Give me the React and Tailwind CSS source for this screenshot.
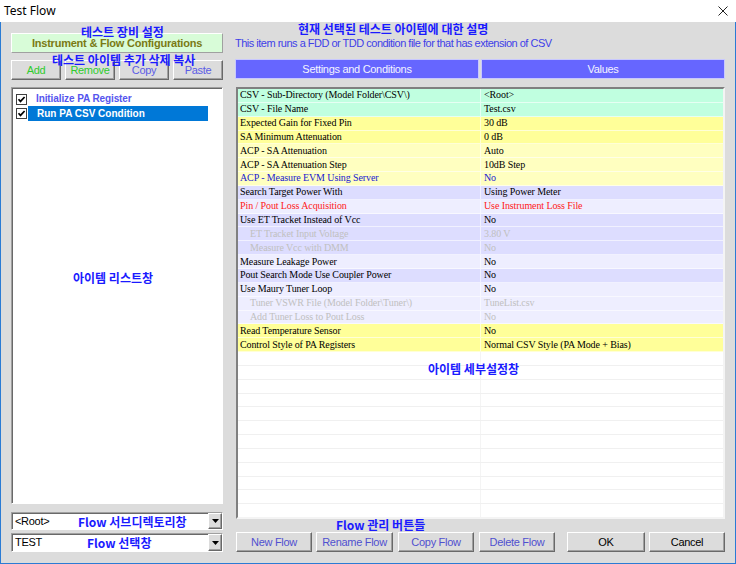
const raised =
  'border border-t-white border-l-white border-r-[#696969] border-b-[#696969] shadow-[inset_-1px_-1px_0_#a0a0a0]';
const sunken =
  'border border-t-[#a0a0a0] border-l-[#a0a0a0] border-r-white border-b-white shadow-[inset_1px_1px_0_#696969]';

const rows = [
  { l: 'CSV - Sub-Directory (Model Folder\\CSV\\)', v: '<Root>', bg: 'bg-[#c0ffe0]' },
  { l: 'CSV - File Name', v: 'Test.csv', bg: 'bg-[#c0ffe0]' },
  { l: 'Expected Gain for Fixed Pin', v: '30 dB', bg: 'bg-[#ffff99]' },
  { l: 'SA Minimum Attenuation', v: '0 dB', bg: 'bg-[#ffff99]' },
  { l: 'ACP - SA Attenuation', v: 'Auto', bg: 'bg-[#ffffc0]' },
  { l: 'ACP - SA Attenuation Step', v: '10dB Step', bg: 'bg-[#ffffc0]' },
  { l: 'ACP - Measure EVM Using Server', v: 'No', bg: 'bg-[#ffffc0]', c: 'text-[#2020d0]' },
  { l: 'Search Target Power With', v: 'Using Power Meter', bg: 'bg-[#ddddff]' },
  { l: 'Pin / Pout Loss Acquisition', v: 'Use Instrument Loss File', bg: 'bg-[#eeeeff]', c: 'text-[#ff2020]' },
  { l: 'Use ET Tracket Instead of Vcc', v: 'No', bg: 'bg-[#ddddff]' },
  { l: 'ET Tracket Input Voltage', v: '3.80 V', bg: 'bg-[#ddddff]', dis: true },
  { l: 'Measure Vcc with DMM', v: 'No', bg: 'bg-[#ddddff]', dis: true },
  { l: 'Measure Leakage Power', v: 'No', bg: 'bg-[#eeeeff]' },
  { l: 'Pout Search Mode Use Coupler Power', v: 'No', bg: 'bg-[#ddddff]' },
  { l: 'Use Maury Tuner Loop', v: 'No', bg: 'bg-[#eeeeff]' },
  { l: 'Tuner VSWR File (Model Folder\\Tuner\\)', v: 'TuneList.csv', bg: 'bg-[#eeeeff]', dis: true },
  { l: 'Add Tuner Loss to Pout Loss', v: 'No', bg: 'bg-[#eeeeff]', dis: true },
  { l: 'Read Temperature Sensor', v: 'No', bg: 'bg-[#ffff99]' },
  { l: 'Control Style of PA Registers', v: 'Normal CSV Style (PA Mode + Bias)', bg: 'bg-[#ffff99]' },
];

function Btn({ children, className = '' }) {
  return (
    <div
      className={`flex items-center justify-center bg-[#dcdcdc] text-[11px] tracking-[-0.3px] leading-none ${raised} ${className}`}
    >
      {children}
    </div>
  );
}

function Check() {
  return (
    <svg width="11" height="11" viewBox="0 0 11 11" className="shrink-0">
      <rect x="0.5" y="0.5" width="10" height="10" fill="#fff" stroke="#404040" />
      <path d="M2.5 5.2 L4.5 7.4 L8.6 3" stroke="#000" strokeWidth="1.7" fill="none" />
    </svg>
  );
}

function Combo({ text, className = '' }) {
  return (
    <div className={`flex items-center bg-white ${sunken} ${className}`}>
      <span className="flex-1 pl-[3px] text-[11px] tracking-[-0.3px] leading-none">{text}</span>
      <div className={`w-[14px] h-full flex items-center justify-center bg-[#dcdcdc] ${raised}`}>
        <svg width="7" height="4" viewBox="0 0 7 4">
          <path d="M0 0 H7 L3.5 4 Z" fill="#000" />
        </svg>
      </div>
    </div>
  );
}

function Note({ children, className }) {
  return (
    <div
      className={`absolute font-['Noto_Sans_CJK_KR',sans-serif] font-bold text-[12px] leading-[12px] text-[#1a1aff] whitespace-nowrap ${className}`}
    >
      {children}
    </div>
  );
}

export default function App() {
  return (
    <div className="relative w-[736px] h-[564px] flex flex-col bg-[#2b7bd4] font-['Liberation_Sans',Arial,sans-serif] text-black">
      {/* title bar */}
      <div className="h-[22px] bg-white flex items-center justify-between pl-[4px] pr-[8px]">
        <span className="font-['Noto_Sans',sans-serif] text-[12px] leading-none">Test Flow</span>
        <svg width="10" height="10" viewBox="0 0 10 10">
          <path d="M0.5 0.5 L9.5 9.5 M9.5 0.5 L0.5 9.5" stroke="#222" strokeWidth="1" />
        </svg>
      </div>

      <div className="flex-1 mx-px mb-px bg-[#dcdcdc] flex items-start pl-[10px] gap-[12px]">
        {/* left column */}
        <div className="w-[212px] pt-[11px] flex flex-col">
          <div className="h-[20px] flex items-center justify-center bg-[#d8fcd8] border border-t-white border-l-white border-r-[#a0a0a0] border-b-[#a0a0a0] text-[11px] font-bold tracking-[-0.22px] text-[#7a7a14]">
            Instrument &amp; Flow Configurations
          </div>
          <div className="mt-[7px] flex gap-[4px]">
            <Btn className="w-[50px] h-[20px] text-[#2ecc2e]">Add</Btn>
            <Btn className="w-[50px] h-[20px] text-[#2ecc2e]">Remove</Btn>
            <Btn className="w-[50px] h-[20px] text-[#5b5be6]">Copy</Btn>
            <Btn className="w-[50px] h-[20px] text-[#5b5be6]">Paste</Btn>
          </div>
          <div className={`mt-[7px] h-[417px] bg-white pt-[4px] ${sunken}`}>
            <div className="h-[14px] flex items-center pl-[4px] gap-[9px]">
              <Check />
              <span className="text-[10px] font-bold tracking-[-0.1px] text-[#5555ee] leading-none">Initialize PA Register</span>
            </div>
            <div className="h-[15px] flex items-center pl-[4px]">
              <Check />
              <div className="ml-[1px] w-[180px] h-[15px] bg-[#0078d7] flex items-center pl-[9px]">
                <span className="text-[10px] font-bold text-white leading-none">Run PA CSV Condition</span>
              </div>
            </div>
          </div>
          <Combo text="<Root>" className="mt-[8px] h-[18px]" />
          <Combo text="TEST" className="mt-[3px] h-[19px]" />
        </div>

        {/* right column */}
        <div className="w-[490px] flex flex-col">
          <div className="h-[37px] pt-[15px] text-[11px] leading-[13px] tracking-[-0.5px] text-[#4040e8]">
            This item runs a FDD or TDD condition file for that has extension of CSV
          </div>
          <div className="h-[20px] flex gap-[2px] text-[11px] tracking-[-0.3px] text-[#f4f4ff]">
            <div className="flex-1 flex items-center justify-center bg-[#6666ff] border border-[#c8c8ff]">
              Settings and Conditions
            </div>
            <div className="flex-1 flex items-center justify-center bg-[#6666ff] border border-[#c8c8ff]">
              Values
            </div>
          </div>
          <div className="mt-[8px] ml-px h-[432px] bg-white overflow-hidden border-2 border-t-[#808080] border-l-[#808080] border-r-[#f4f4f4] border-b-[#f4f4f4]">
            {rows.map((r, i) => (
              <div
                key={i}
                className={`h-[13.85px] flex border-b border-white/60 font-['Liberation_Serif','Times_New_Roman',serif] text-[10px] tracking-[-0.1px] leading-none ${r.bg} ${r.dis ? 'text-[#c0c0c0]' : r.c || 'text-black'}`}
              >
                <div className={`w-[243px] shrink-0 flex items-center border-r border-white/60 ${r.dis ? 'pl-[12px]' : 'pl-[2px]'}`}>
                  {r.l}
                </div>
                <div className="flex-1 flex items-center pl-[3px]">{r.v}</div>
              </div>
            ))}
            {Array.from({ length: 12 }).map((_, i) => (
              <div key={'e' + i} className="h-[13.85px] flex border-b border-[#f0f0f0]">
                <div className="w-[243px] shrink-0 border-r border-[#f4f4f4]" />
                <div className="flex-1" />
              </div>
            ))}
          </div>
          <div className="mt-[13px] ml-px flex">
            <Btn className="w-[76px] h-[20px] text-[#5050d0]">New Flow</Btn>
            <Btn className="ml-[4px] w-[77px] h-[20px] text-[#5050d0]">Rename Flow</Btn>
            <Btn className="ml-[5px] w-[76px] h-[20px] text-[#5050d0]">Copy Flow</Btn>
            <Btn className="ml-[5px] w-[76px] h-[20px] text-[#5050d0]">Delete Flow</Btn>
            <Btn className="ml-[12px] w-[78px] h-[20px]">OK</Btn>
            <Btn className="ml-[4px] w-[76px] h-[20px]">Cancel</Btn>
          </div>
        </div>
      </div>

      {/* annotations */}
      <Note className="left-[81px] top-[26px]">테스트 장비 설정</Note>
      <Note className="left-[52px] top-[54px]">테스트 아이템 추가 삭제 복사</Note>
      <Note className="left-[298px] top-[23px]">현재 선택된 테스트 아이템에 대한 설명</Note>
      <Note className="left-[73px] top-[272px]">아이템 리스트창</Note>
      <Note className="left-[428px] top-[363px]">아이템 세부설정창</Note>
      <Note className="left-[78px] top-[516px]">Flow 서브디렉토리창</Note>
      <Note className="left-[87px] top-[537px]">Flow 선택창</Note>
      <Note className="left-[336px] top-[519px]">Flow 관리 버튼들</Note>
    </div>
  );
}
